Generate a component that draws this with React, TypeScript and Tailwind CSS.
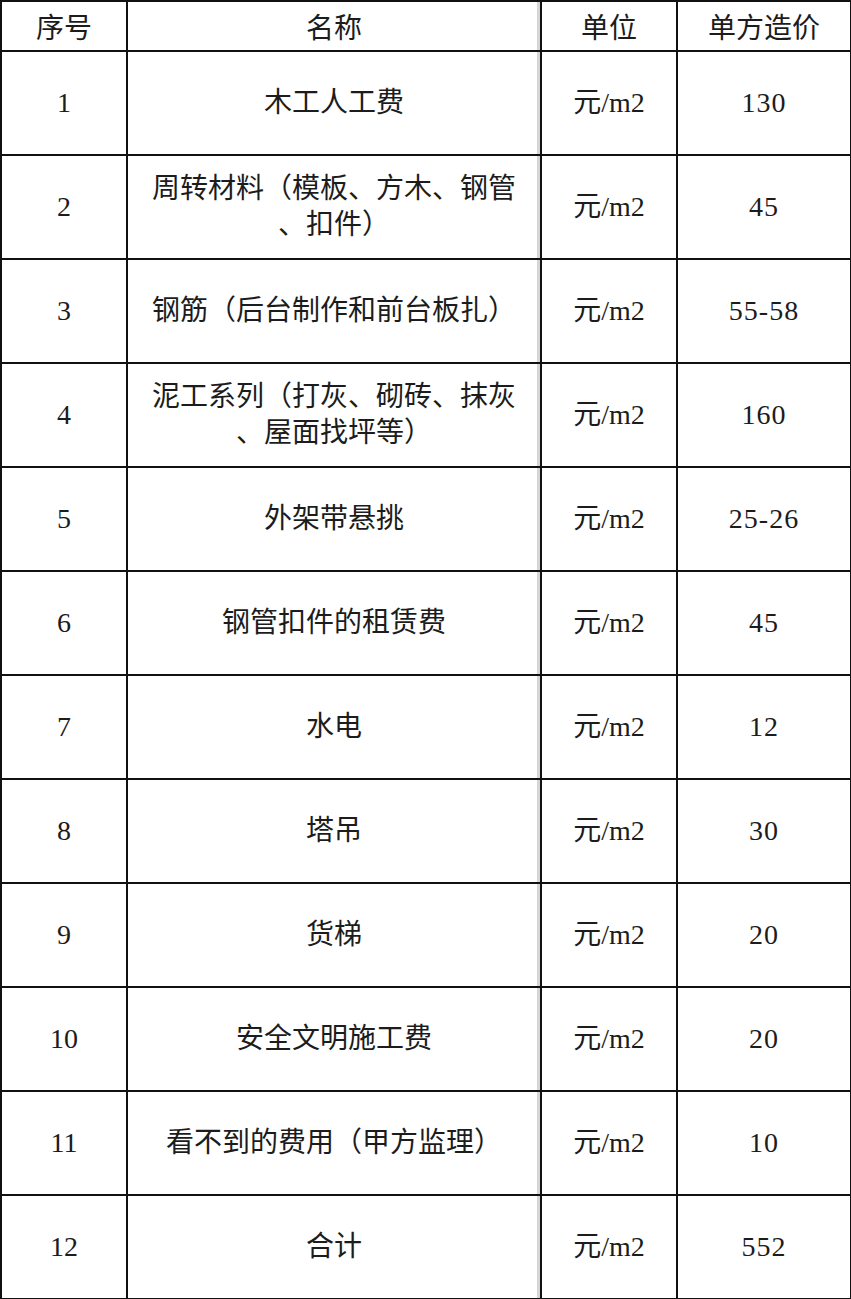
const rows: [string, React.ReactNode, string][] = [
  ['1', '木工人工费', '130'],
  ['2', <>周转材料（模板、方木、钢管<br />、扣件）</>, '45'],
  ['3', '钢筋（后台制作和前台板扎）', '55-58'],
  ['4', <>泥工系列（打灰、砌砖、抹灰<br />、屋面找坪等）</>, '160'],
  ['5', '外架带悬挑', '25-26'],
  ['6', '钢管扣件的租赁费', '45'],
  ['7', '水电', '12'],
  ['8', '塔吊', '30'],
  ['9', '货梯', '20'],
  ['10', '安全文明施工费', '20'],
  ['11', '看不到的费用（甲方监理）', '10'],
  ['12', '合计', '552'],
]

export default function App() {
  return (
    <div className="w-[851px] h-[1299px] bg-white">
      <table
        className="w-[850px] border-collapse text-[28px] leading-[36px] text-[#1c1c1c] table-fixed"
        style={{ fontFamily: '"Liberation Serif", "Noto Sans CJK SC", serif' }}
      >
        <colgroup>
          <col className="w-[126px]" />
          <col className="w-[414px]" />
          <col className="w-[136px]" />
          <col className="w-[174px]" />
        </colgroup>
        <thead>
          <tr className="h-[50px]">
            <th className="border-2 border-[#111] font-normal text-center pt-[6px]">序号</th>
            <th className="border-2 border-[#111] font-normal text-center pt-[6px] shadow-[inset_-3px_0_0_#d6d6d6]">名称</th>
            <th className="border-2 border-[#111] font-normal text-center pt-[6px]">单位</th>
            <th className="border-2 border-[#111] font-normal text-center pt-[6px]">单方造价</th>
          </tr>
        </thead>
        <tbody>
          {rows.map(([no, name, price]) => (
            <tr key={no} className="h-[104px]">
              <td className="border-2 border-[#111] text-center">{no}</td>
              <td className="border-2 border-[#111] text-center shadow-[inset_-3px_0_0_#d6d6d6]">{name}</td>
              <td className="border-2 border-[#111] text-center">元/m2</td>
              <td className="border-2 border-[#111] text-center tracking-[1px]">{price}</td>
            </tr>
          ))}
        </tbody>
      </table>
    </div>
  )
}
